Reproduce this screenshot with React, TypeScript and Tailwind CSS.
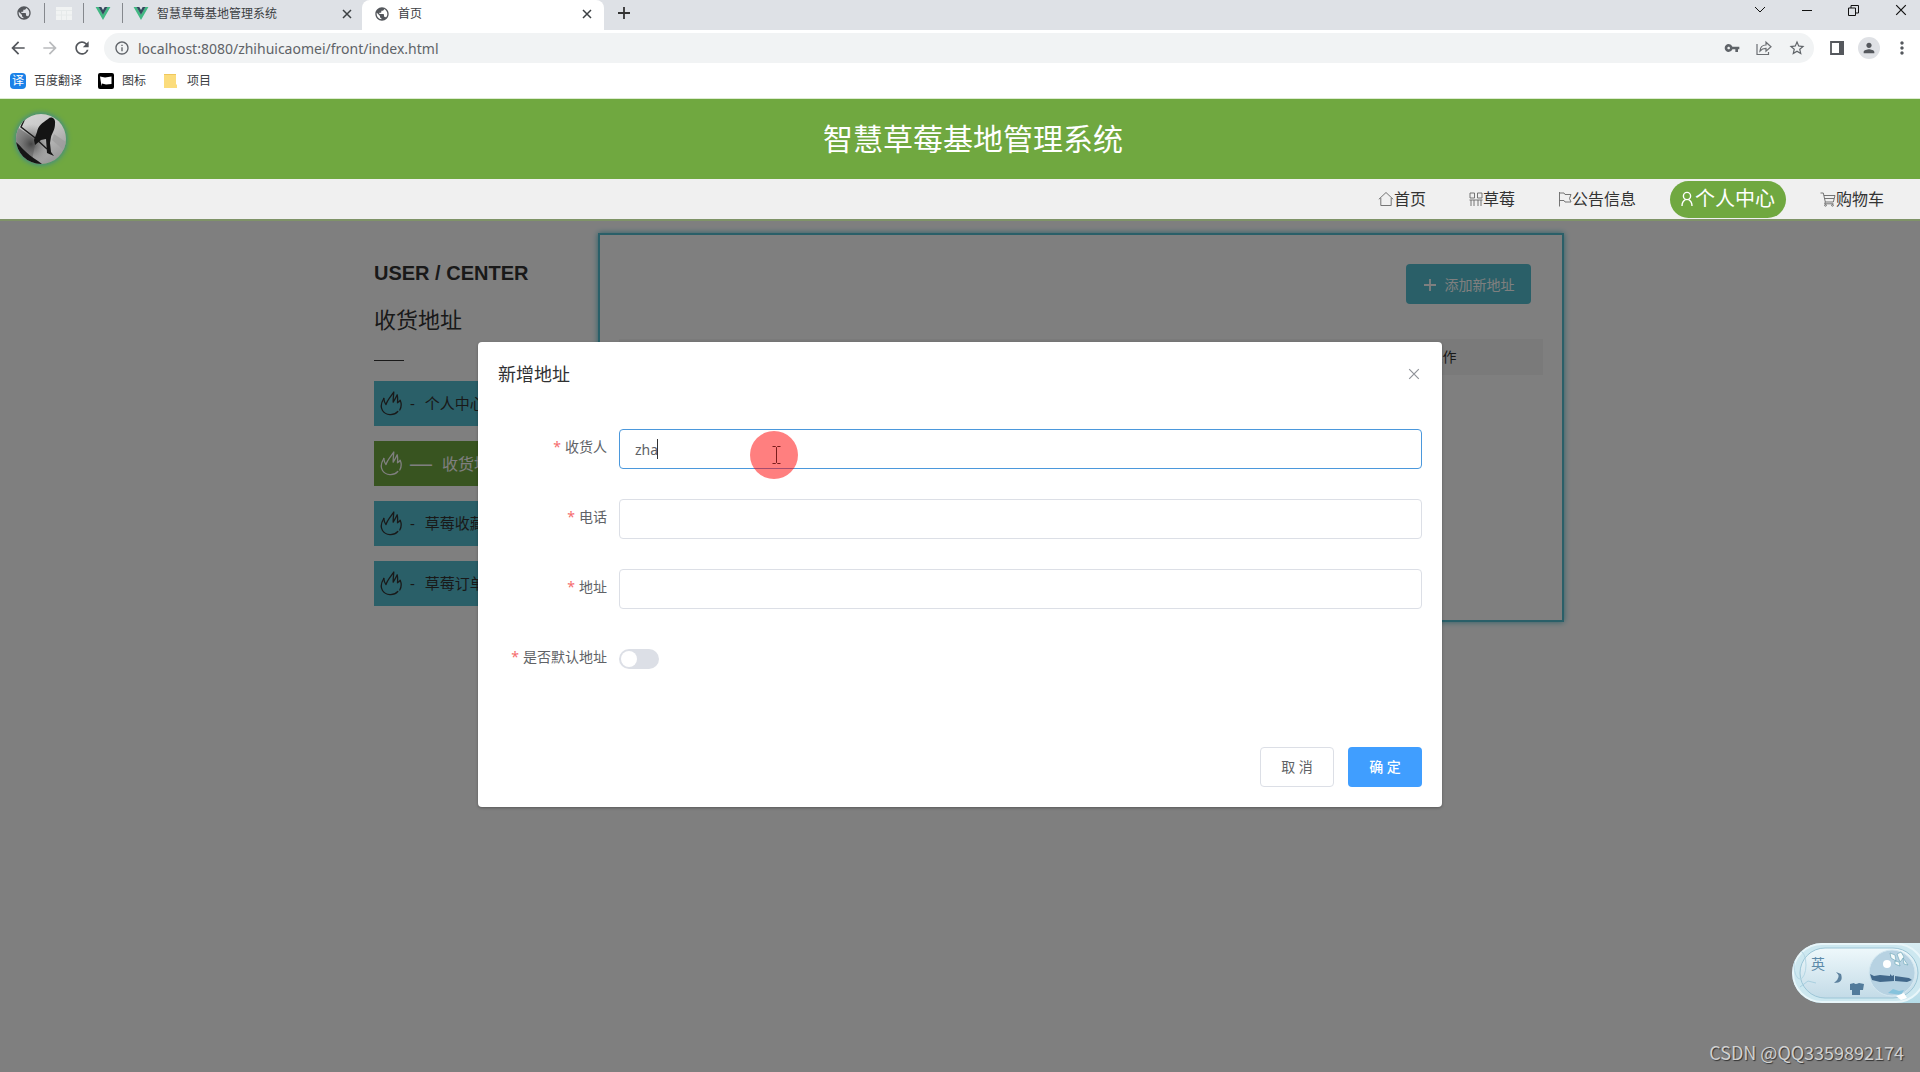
import React from "react";
import {
  MdArrowBack,
  MdArrowForward,
  MdInfoOutline,
  MdMoreVert,
  MdPerson,
  MdPublic,
  MdRefresh,
  MdStarBorder,
  MdVpnKey,
} from "react-icons/md";

function VueLogo() {
  return (
    <svg viewBox="0 0 16 14" className="h-[13px] w-4 shrink-0" aria-hidden="true">
      <path d="M0 0h3.4L8 8l4.6-8H16L8 14z" fill="#42b883" />
      <path d="M3.2 0h3L8 3.2 9.8 0h3L8 8.4z" fill="#35495e" />
    </svg>
  );
}

function TableFavicon() {
  return (
    <svg viewBox="0 0 16 13" className="h-[13px] w-4" aria-hidden="true">
      <rect width="16" height="13" fill="#f1f3f3" />
      <path d="M0 3.5h16M5.5 3.5V13M10.5 3.5V13M0 8h16" stroke="#e6eaea" />
    </svg>
  );
}

function CloseIcon({ className }: { className: string }) {
  return (
    <svg viewBox="0 0 10 10" className={className} fill="none" stroke="currentColor" aria-hidden="true">
      <path d="M1 1l8 8M9 1L1 9" />
    </svg>
  );
}

function ShareIcon() {
  return (
    <svg viewBox="0 0 16 16" className="size-4" fill="none" stroke="#6b6e72" strokeWidth="1.2" aria-hidden="true">
      <path d="M1 4v10.500h11.500v-2.500" />
      <path d="M4 11c.3-4 2.500-6 6-6V2.200l5 4.600-5 4.400V8.400C7.200 8.400 5.500 9.200 4 11z" />
    </svg>
  );
}

function HomeIcon() {
  return (
    <svg viewBox="0 0 16 16" className="size-4" fill="none" stroke="currentColor" strokeWidth="0.9" aria-hidden="true">
      <path d="M.8 8.300L8 1.500l7.200 6.800M2.800 7v7.500h10.400V7" />
    </svg>
  );
}

function GridIcon() {
  return (
    <svg viewBox="0 0 14 16" className="h-4 w-[14px]" fill="none" stroke="currentColor" strokeWidth="0.9" aria-hidden="true">
      <path d="M1 2h4.500v5H1zM8.500 2H13v5H8.500zM.5 9h13M2 9v6M5 9v6M9 9v6M12 9v6" />
    </svg>
  );
}

function FlagIcon() {
  return (
    <svg viewBox="0 0 14 16" className="h-4 w-[14px]" fill="none" stroke="currentColor" strokeWidth="0.9" aria-hidden="true">
      <path d="M1.500 1v14.500M1.500 2h4.500l1 1.500h6l-1.500 4 1.500 3.500H7l-1-1.500H1.500" />
    </svg>
  );
}

function UserIcon() {
  return (
    <svg viewBox="0 0 12 16" className="h-4 w-3" fill="none" stroke="currentColor" strokeWidth="1.4" aria-hidden="true">
      <circle cx="6" cy="5" r="3.600" />
      <path d="M1 15c0-3 1-5 3.400-6.300M11 15c0-3-1-5-3.400-6.300" />
    </svg>
  );
}

function CartIcon() {
  return (
    <svg viewBox="0 0 16 16" className="size-4" fill="none" stroke="currentColor" strokeWidth="0.9" aria-hidden="true">
      <path d="M.5 2h2.800l2 9h8l1.700-6.500H4M4.500 7.500h9.500M5.300 11l-.6 1.800h8.800" />
      <circle cx="5.500" cy="14.300" r=".9" />
      <circle cx="12.500" cy="14.300" r=".9" />
    </svg>
  );
}

function FlameIcon() {
  return (
    <svg viewBox="0 0 22 25" className="h-[25px] w-[22px] shrink-0" fill="none" stroke="currentColor" strokeWidth="1.3" strokeLinecap="round" strokeLinejoin="round" aria-hidden="true">
      <path d="M3.800 7.500C1 12 .3 16 2.500 19.500c3 5 11.500 5.500 15.300 1" />
      <path d="M3.800 7.500c.2 2.500.9 4.300 2.200 6 1.200-4.500 4.500-7.500 7.800-12.500-.3 4-.8 7-.6 10.200 1.600-2.600 2.800-4.800 4-7.400.7 3 .5 5.400.3 8 1.300-.7 1.900-1.400 2.700-2.600 1.500 3.600 1.200 7-.4 9.800" />
    </svg>
  );
}

function Avatar() {
  return (
    <svg viewBox="0 0 50 50" className="size-[50px] rounded-full shadow-[0_0_5px_1px_#3c8890]" role="img" aria-label="logo">
      <defs>
        <linearGradient id="mist" x1="0" y1="0" x2="0.6" y2="1">
          <stop offset="0" stopColor="#d8d8d8" />
          <stop offset=".5" stopColor="#c6c6c6" />
          <stop offset="1" stopColor="#9a9a9a" />
        </linearGradient>
        <radialGradient id="shade" cx="0.3" cy="0.6" r="0.4">
          <stop offset="0" stopColor="#444" />
          <stop offset="1" stopColor="#888" stopOpacity="0" />
        </radialGradient>
      </defs>
      <rect width="50" height="50" fill="url(#mist)" />
      <path d="M0 12l20 14-4 20L0 40z" fill="#6d6d6d" opacity=".7" />
      <rect width="50" height="50" fill="url(#shade)" />
      <path d="M38 20l12 8v10L36 26z" fill="#9b9b9b" opacity=".7" />
      <path d="M0 28c5 4 9 11 22 19l4 3H0z" fill="#151515" />
      <path d="M10 2L5 13l13 10 13 12" stroke="#1b1b1b" strokeWidth="1.4" fill="none" />
      <path d="M32 5c3-3 8-1 7 5 0 6-3 9-4 13l-1 6 1 9 3 4-7-3-1-14-5 1-6 5-1-5 3-8c1-6 5-9 11-13z" fill="#141414" />
    </svg>
  );
}

function Separator() {
  return <span className="h-5 w-px bg-[#85888d]" />;
}

function BrowserChrome() {
  return (
    <div className="bg-white text-[#3c4043]">
      <div className="flex h-[30px] items-center justify-between bg-[#dee1e6]">
        <div className="flex h-full items-center">
          <div className="flex h-full items-center pb-1 pl-4">
            <MdPublic className="mr-3 size-4 text-[#54575c]" />
            <Separator />
            <span className="mx-[11px]"><TableFavicon /></span>
            <Separator />
            <span className="mx-[11px]"><VueLogo /></span>
            <Separator />
          </div>
          <div className="flex h-full w-[239px] items-center pb-[3px] pl-[10px]">
            <VueLogo />
            <span className="ml-2 text-xs">智慧草莓基地管理系统</span>
            <button type="button" aria-label="关闭标签页" className="mr-[10px] ml-auto">
              <CloseIcon className="size-[10px] stroke-[1.5]" />
            </button>
          </div>
          <div className="flex h-full w-[242px] items-center rounded-t-lg bg-white pb-[3px] pl-3">
            <MdPublic className="size-4 text-[#54575c]" />
            <span className="ml-2 text-xs">首页</span>
            <button type="button" aria-label="关闭标签页" className="mr-3 ml-auto">
              <CloseIcon className="size-[10px] stroke-[1.5]" />
            </button>
          </div>
          <button type="button" aria-label="新标签页" className="ml-[14px] pb-1">
            <svg viewBox="0 0 12 12" className="size-3" stroke="#333" strokeWidth="1.8"><path d="M6 0v12M0 6h12" /></svg>
          </button>
        </div>
        <div className="flex items-center gap-9 pr-[13px] pb-[10px] text-[#111]">
          <button type="button" aria-label="搜索标签页">
            <svg viewBox="0 0 12 10" className="h-[10px] w-3" fill="none" stroke="currentColor"><path d="M1 2l5 5 5-5" /></svg>
          </button>
          <button type="button" aria-label="最小化">
            <svg viewBox="0 0 10 10" className="size-[10px]" stroke="currentColor"><path d="M0 5.500h10" /></svg>
          </button>
          <button type="button" aria-label="还原">
            <svg viewBox="0 0 11 11" className="size-[11px]" fill="none" stroke="currentColor"><path d="M.5 3h7v7.500h-7zM3 3V.5h7.500V8H7.500" /></svg>
          </button>
          <button type="button" aria-label="关闭窗口">
            <CloseIcon className="size-3" />
          </button>
        </div>
      </div>

      <div className="flex h-[36px] items-center pr-2 pl-2">
        <button type="button" aria-label="后退"><MdArrowBack className="size-5 text-[#54575c]" /></button>
        <button type="button" aria-label="前进" className="ml-3"><MdArrowForward className="size-5 text-[#b9bbbd]" /></button>
        <button type="button" aria-label="刷新" className="ml-3"><MdRefresh className="size-5 text-[#54575c]" /></button>
        <div className="ml-3 flex h-[30px] flex-1 items-center rounded-full bg-[#f1f3f4] pr-2 pl-[10px]">
          <MdInfoOutline className="size-4 text-[#5f6368]" />
          <input
            aria-label="网址"
            readOnly
            defaultValue="localhost:8080/zhihuicaomei/front/index.html"
            className="ml-2 h-6 flex-1 bg-transparent text-sm text-[#5f6368] outline-none"
          />
          <div className="flex items-center gap-4 text-[#5f6368]">
            <MdVpnKey className="size-4" />
            <ShareIcon />
            <MdStarBorder className="size-[18px]" />
          </div>
        </div>
        <svg viewBox="0 0 14 14" className="ml-4 size-[14px]" aria-hidden="true">
          <path d="M1 1h12v12H1z" fill="none" stroke="#55585d" strokeWidth="1.8" />
          <path d="M9 0h5v14H9z" fill="#55585d" />
        </svg>
        <span className="ml-[14px] flex size-[22px] items-center justify-center rounded-full bg-[#dfe1e5]">
          <MdPerson className="size-4 text-[#55585d]" />
        </span>
        <button type="button" aria-label="菜单" className="ml-3"><MdMoreVert className="size-5 text-[#55585d]" /></button>
      </div>

      <nav aria-label="书签" className="flex h-8 items-center pb-[3px] pl-[10px] text-xs">
        <a href="#fanyi" className="flex items-center gap-2">
          <span className="flex size-4 items-center justify-center rounded-sm bg-[#1b82e8] text-xs leading-none text-white">译</span>
          百度翻译
        </a>
        <a href="#icons" className="ml-4 flex items-center gap-2">
          <svg viewBox="0 0 16 16" className="size-4" aria-hidden="true">
            <rect width="16" height="16" rx="2" fill="#000" />
            <path d="M2 3.500l5 1 6.500-1v7.500l-5.500.5-4-1-.5 2.500z" fill="#fff" />
          </svg>
          图标
        </a>
        <a href="#projects" className="ml-[18px] flex items-center gap-[10px]">
          <svg viewBox="0 0 13 14" className="h-[14px] w-[13px]" aria-hidden="true">
            <path d="M0 0h12v10l1 1v3H0z" fill="#fbdc7c" />
            <path d="M0 0h12v1H0z" fill="#efc75c" />
          </svg>
          项目
        </a>
      </nav>
      <div className="h-px bg-[#dcebd0]" />
    </div>
  );
}

const navLinks = [
  { label: "首页", href: "#home", icon: <HomeIcon /> },
  { label: "草莓", href: "#berries", icon: <GridIcon /> },
  { label: "公告信息", href: "#news", icon: <FlagIcon /> },
];

const sideItems = [
  { label: "个人中心", active: false },
  { label: "收货地址", active: true },
  { label: "草莓收藏", active: false },
  { label: "草莓订单", active: false },
];

function SiteHeader() {
  return (
    <header>
      <div className="flex h-20 items-center bg-[#70a840] pr-10 pl-4">
        <Avatar />
        <h1 className="flex-1 text-center text-[30px] leading-10 text-white">智慧草莓基地管理系统</h1>
      </div>
      <nav aria-label="主导航" className="flex h-10 items-center justify-end bg-[#f0f0f0] pr-9 text-base text-[#333]">
        <div className="mr-[34px] flex items-center gap-[43px]">
          {navLinks.map((l) => (
            <a key={l.label} href={l.href} className="flex items-center">
              <span className="text-[#666]">{l.icon}</span>
              {l.label}
            </a>
          ))}
        </div>
        <a href="#me" className="mr-[34px] flex h-[37px] items-center gap-[2px] rounded-full bg-[#70a840] px-[11px] text-xl text-white">
          <UserIcon />
          个人中心
        </a>
        <a href="#cart" className="flex items-center">
          <span className="text-[#666]"><CartIcon /></span>
          购物车
        </a>
      </nav>
    </header>
  );
}

function AddressPage() {
  return (
    <div className="mx-auto flex w-[1208px] max-w-full items-start justify-between pt-[14px] pl-[18px]">
      <aside className="w-[210px] pt-6">
        <p className="font-['Liberation_Sans',sans-serif] text-xl leading-8 font-bold whitespace-nowrap text-[#333]">USER / CENTER</p>
        <h2 className="mt-[14px] text-[22px] leading-8 text-[#333]">收货地址</h2>
        <div className="mt-[25px] h-px w-[30px] bg-[#333]" />
        <ul className="mt-5 flex flex-col gap-[15px]">
          {sideItems.map((it) => (
            <li key={it.label}>
              <a
                href="#item"
                className={
                  it.active
                    ? "flex h-[45px] items-center bg-[#70a840] pl-[6px] text-base whitespace-nowrap text-white"
                    : "flex h-[45px] items-center bg-[#54bfd0] pl-[6px] text-[15px] whitespace-nowrap text-[#333]"
                }
              >
                <FlameIcon />
                <span className={it.active ? "ml-2 font-['Liberation_Sans',sans-serif] text-[22px]" : "ml-2"}>{it.active ? "—" : "-"}</span>
                <span className="ml-[10px]">{it.label}</span>
              </a>
            </li>
          ))}
        </ul>
      </aside>
      <section className="h-[389px] w-[966px] border-2 border-[#54bfd0] px-[19px] pt-[29px] shadow-[0_0_6px_#54bfd0]">
        <div className="flex justify-end pr-[12px]">
          <button type="button" className="flex h-10 w-[125px] items-center justify-center rounded bg-[#54bfd0] pt-[2px] text-sm text-white">
            <svg viewBox="0 0 14 14" className="mr-2 size-[14px]" stroke="currentColor" strokeWidth="1.8" aria-hidden="true"><path d="M7 1v12M1 7h12" /></svg>
            添加新地址
          </button>
        </div>
        <table className="mt-[35px] w-full table-fixed text-sm text-[#333]">
          <thead>
            <tr className="h-9 bg-[#f5f5f5]">
              <th className="font-normal">收货人</th>
              <th className="font-normal">电话</th>
              <th className="font-normal">地址</th>
              <th className="font-normal">默认地址</th>
              <th className="pr-4 font-normal">操作</th>
            </tr>
          </thead>
        </table>
      </section>
    </div>
  );
}

function RequiredLabel({ id, text }: { id: string; text: string }) {
  return (
    <label htmlFor={id} className="w-[121px] shrink-0 pr-3 pb-1 text-right text-sm text-[#606266]">
      <span className="mr-1 text-[#f56c6c]">*</span>
      {text}
    </label>
  );
}

function Field({ id, text, value, focused }: { id: string; text: string; value?: string; focused?: boolean }) {
  return (
    <div className="flex h-10 items-center">
      <RequiredLabel id={id} text={text} />
      <div className="relative flex-1">
        <input
          id={id}
          defaultValue={value}
          className={
            focused
              ? "h-10 w-full rounded border border-[#4b98dc] px-[15px] text-sm text-[#606266] outline-none"
              : "h-10 w-full rounded border border-[#dcdfe6] px-[15px] text-sm text-[#606266] outline-none"
          }
        />
        {focused && (
          <>
            <span className="absolute top-[10px] left-[38px] h-5 w-px bg-[#333]" />
            <span className="absolute top-[2px] left-[131px] flex size-12 items-center justify-center rounded-full bg-[#ff0000]/50">
              <svg viewBox="0 0 9 18" className="ml-1 h-[18px] w-[9px]" fill="none" stroke="#7a1c1c" aria-hidden="true">
                <path d="M.5.5h3l1 1 1-1h3M4.500 1.500v15M.5 17.500h3l1-1 1 1h3" />
              </svg>
            </span>
          </>
        )}
      </div>
    </div>
  );
}

function AddressDialog() {
  return (
    <div role="dialog" aria-label="新增地址" className="w-[964px] max-w-full rounded-sm bg-white pb-5 shadow-[0_1px_3px_rgba(0,0,0,0.3)]">
      <div className="flex items-center justify-between pt-5 pr-[22px] pl-5">
        <h3 className="text-lg leading-6 text-[#303133]">新增地址</h3>
        <button type="button" aria-label="关闭" className="text-[#909399]">
          <CloseIcon className="size-3" />
        </button>
      </div>
      <form className="mt-[43px] flex flex-col gap-[30px] px-5" onSubmit={(e) => e.preventDefault()}>
        <Field id="receiver" text="收货人" value="zha" focused />
        <Field id="phone" text="电话" />
        <Field id="address" text="地址" />
        <div className="flex h-10 items-center">
          <RequiredLabel id="isdefault" text="是否默认地址" />
          <input
            id="isdefault"
            type="checkbox"
            role="switch"
            className="h-5 w-10 appearance-none rounded-full bg-[#dcdfe6] before:m-[2px] before:block before:size-4 before:rounded-full before:bg-white"
          />
        </div>
        <div className="flex justify-end gap-[14px] pt-[38px]">
          <button type="button" className="h-10 w-[74px] rounded border border-[#dcdfe6] text-sm text-[#606266]">取 消</button>
          <button type="submit" className="h-10 w-[74px] rounded bg-[#409eff] text-sm font-medium text-white">确 定</button>
        </div>
      </form>
    </div>
  );
}

function InputMethodBar() {
  return (
    <div className="relative h-[60px] w-32 overflow-hidden rounded-l-full bg-gradient-to-b from-[#d9eef4] via-[#cfe3ec] to-[#b4dce8]">
      <svg viewBox="0 0 128 60" className="h-full w-full" aria-hidden="true">
        <defs>
          <linearGradient id="ice" x1="0" y1="0" x2="0" y2="1">
            <stop offset="0" stopColor="#eef8fb" />
            <stop offset="1" stopColor="#c3dbe7" />
          </linearGradient>
        </defs>
        <rect x="1" y="1" width="132" height="58" rx="29" fill="#cde8f0" stroke="#e8f6fa" strokeWidth="2" />
        <rect x="8" y="5" width="118" height="50" rx="25" fill="url(#ice)" stroke="#9cc5d6" />
        <ellipse cx="8" cy="22" rx="6" ry="14" fill="none" stroke="#b4d6e4" />
        <path d="M8 44l8-6 8 2" fill="none" stroke="#a8cfdf" />
        <circle cx="100" cy="30" r="23" fill="#b7d2e2" stroke="#d3e7f0" />
        <circle cx="95" cy="21" r="4" fill="#fff" />
        <path d="M98 10l5 2 1 6-5-3zM105 11l4-2 3 5-4 5zM103 18l4 1 1 4-5-2zM111 15l5 7-4-1z" fill="#f4fbfb" stroke="#6aa5b5" strokeWidth=".6" />
        <path d="M78 31l4 2 6-1 10 1v-2l2 2 2-1v6l-14 1-8-2zM103 33l14 2 3 2-5 2-12-1z" fill="#42688b" />
        <path d="M96 50l5-4 6 2 5-1-3 5z" fill="#86c3dd" />
        <path d="M104 53l8-3 3 5-6 2z" fill="#fff" />
        <path d="M44 29q6 5-2 11q10 0 7-9z" fill="#5c819e" />
        <path d="M58 41l4-1q1 2 5 0l5 1-1 6h-3v5h-8v-5h-2z" fill="#527b9b" />
      </svg>
      <span className="absolute top-[11px] left-[19px] text-sm leading-5 text-[#5d8aa9]">英</span>
    </div>
  );
}

export default function App() {
  return (
    <div className="flex min-h-screen flex-col overflow-hidden bg-white font-['Noto_Sans','Noto_Sans_CJK_SC',sans-serif]">
      <BrowserChrome />
      <SiteHeader />
      <main className="relative flex-1">
        <AddressPage />
        <div className="absolute inset-0 flex items-start justify-center border-t-2 border-[#7f9368] bg-black/50 pt-[121px]">
          <AddressDialog />
        </div>
        <div className="absolute right-0 bottom-[69px]">
          <InputMethodBar />
        </div>
        <p className="absolute right-4 bottom-[6px] font-['Noto_Sans_CJK_SC',sans-serif] text-lg leading-7 text-[#d0d0d0] [text-shadow:1px_1px_1px_#333]">
          CSDN @QQ3359892174
        </p>
      </main>
    </div>
  );
}
